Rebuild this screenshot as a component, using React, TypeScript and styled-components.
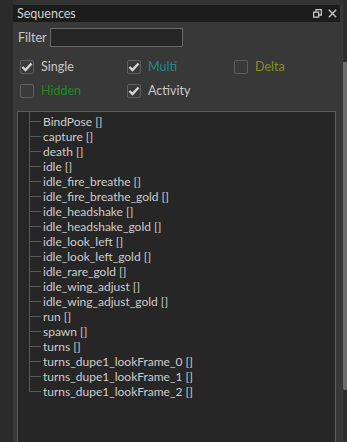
import React from 'react'
import styled, { createGlobalStyle } from 'styled-components'

const GlobalStyle = createGlobalStyle`
  html, body {
    margin: 0;
    padding: 0;
    background: #2c2c2c;
  }
  body {
    font-family: Lato, 'Open Sans', 'DejaVu Sans', sans-serif;
  }
`

const Page = styled.div`
  display: flex;
  width: 347px;
  height: 442px;
  overflow: hidden;
  background: #2c2c2c;
`

const Gutter = styled.div`
  width: 13px;
  flex: none;
  background: #2b2b2b;
`

const Panel = styled.section`
  width: 330px;
  flex: none;
  display: flex;
  flex-direction: column;
  background: #383838;
  box-shadow: inset 0 5px 0 #333333;
  padding-top: 5px;
  box-sizing: border-box;
`

const TitleBar = styled.header`
  height: 17px;
  margin-right: 3px;
  background: #1c1c1c;
  display: flex;
  align-items: center;
  justify-content: space-between;
  padding: 0 3px 0 4px;
  color: #d0d0d0;
  font-size: 12.5px;
  line-height: 17px;
`

const TitleIcons = styled.div`
  display: flex;
  align-items: center;
  gap: 6px;
  color: #c4c4c4;
`

const FilterRow = styled.div`
  display: flex;
  align-items: center;
  gap: 3px;
  margin: 6px 0 0 5px;
  color: #c8c8c8;
  font-size: 12.5px;
  line-height: 19px;
`

const FilterInput = styled.div`
  width: 131px;
  height: 17px;
  border: 1px solid #686868;
  background: #262626;
`

const CheckGrid = styled.div`
  display: grid;
  grid-template-columns: repeat(3, 107px);
  row-gap: 10px;
  margin: 13px 0 0 7px;
`

const CheckItem = styled.label<{ $color: string }>`
  display: flex;
  align-items: center;
  gap: 7px;
  height: 14px;
  font-size: 12.5px;
  line-height: 14px;
  color: ${(p) => p.$color};
`

const Box = styled.span`
  width: 12px;
  height: 12px;
  border: 1px solid #5e5e5e;
  border-radius: 2px;
  background: #3a3a3a;
  display: flex;
  align-items: center;
  justify-content: center;
`

const ListBox = styled.div`
  flex: 1;
  margin: 13px 7px 0 4px;
  border: 1px solid #5c5c5c;
  border-bottom: none;
  background: #262626;
  padding: 0 0 0 11px;
`

const Tree = styled.ul`
  list-style: none;
  margin: 0;
  padding: 2px 0 0;
  border-left: 1px solid #5a5a5a;
  height: 278px;
`

const Row = styled.li`
  height: 15px;
  line-height: 15px;
  display: flex;
  align-items: center;
  font-size: 12px;
  color: #cdcdcd;
  white-space: nowrap;

  &::before {
    content: '';
    width: 11px;
    height: 1px;
    background: #5a5a5a;
    margin-right: 2px;
    flex: none;
  }
`

const ScrollTrack = styled.div`
  width: 4px;
  flex: none;
  display: flex;
  flex-direction: column;
  background: #2e2e2e;
`

const Thumb = styled.div`
  margin-top: 62px;
  height: 328px;
  background: #6c6c6c;
  border-radius: 0 0 0 2px;
`

const Check = () => (
  <svg width="12" height="10" viewBox="0 0 12 10">
    <path d="M1.5 5 L4.5 8 L10.5 1.5" fill="none" stroke="#d6d6d6" strokeWidth="2.4" />
  </svg>
)

const RestoreIcon = () => (
  <svg width="9" height="9" viewBox="0 0 9 9" fill="none" stroke="currentColor" strokeWidth="1.3">
    <rect x="0.65" y="3.15" width="5" height="5" />
    <path d="M3 3 V0.65 H8.35 V6 H6" />
  </svg>
)

const CloseIcon = () => (
  <svg width="9" height="9" viewBox="0 0 9 9" stroke="currentColor" strokeWidth="1.4">
    <path d="M0.8 0.8 L8.2 8.2 M8.2 0.8 L0.8 8.2" />
  </svg>
)

const filters = [
  { label: 'Single', color: '#c8c8c8', checked: true },
  { label: 'Multi', color: '#1f8a8a', checked: true },
  { label: 'Delta', color: '#8c8c1c', checked: false },
  { label: 'Hidden', color: '#1c8c1c', checked: false },
  { label: 'Activity', color: '#c8c8c8', checked: true },
]

const sequences = [
  'BindPose',
  'capture',
  'death',
  'idle',
  'idle_fire_breathe',
  'idle_fire_breathe_gold',
  'idle_headshake',
  'idle_headshake_gold',
  'idle_look_left',
  'idle_look_left_gold',
  'idle_rare_gold',
  'idle_wing_adjust',
  'idle_wing_adjust_gold',
  'run',
  'spawn',
  'turns',
  'turns_dupe1_lookFrame_0',
  'turns_dupe1_lookFrame_1',
  'turns_dupe1_lookFrame_2',
]

export default function App() {
  return (
    <>
      <GlobalStyle />
      <Page>
        <Gutter />
        <Panel>
          <TitleBar>
            <span>Sequences</span>
            <TitleIcons>
              <RestoreIcon />
              <CloseIcon />
            </TitleIcons>
          </TitleBar>
          <FilterRow>
            <span>Filter</span>
            <FilterInput />
          </FilterRow>
          <CheckGrid>
            {filters.map((f) => (
              <CheckItem key={f.label} $color={f.color}>
                <Box>{f.checked && <Check />}</Box>
                {f.label}
              </CheckItem>
            ))}
          </CheckGrid>
          <ListBox>
            <Tree>
              {sequences.map((s) => (
                <Row key={s}>{s} []</Row>
              ))}
            </Tree>
          </ListBox>
        </Panel>
        <ScrollTrack>
          <Thumb />
        </ScrollTrack>
      </Page>
    </>
  )
}
